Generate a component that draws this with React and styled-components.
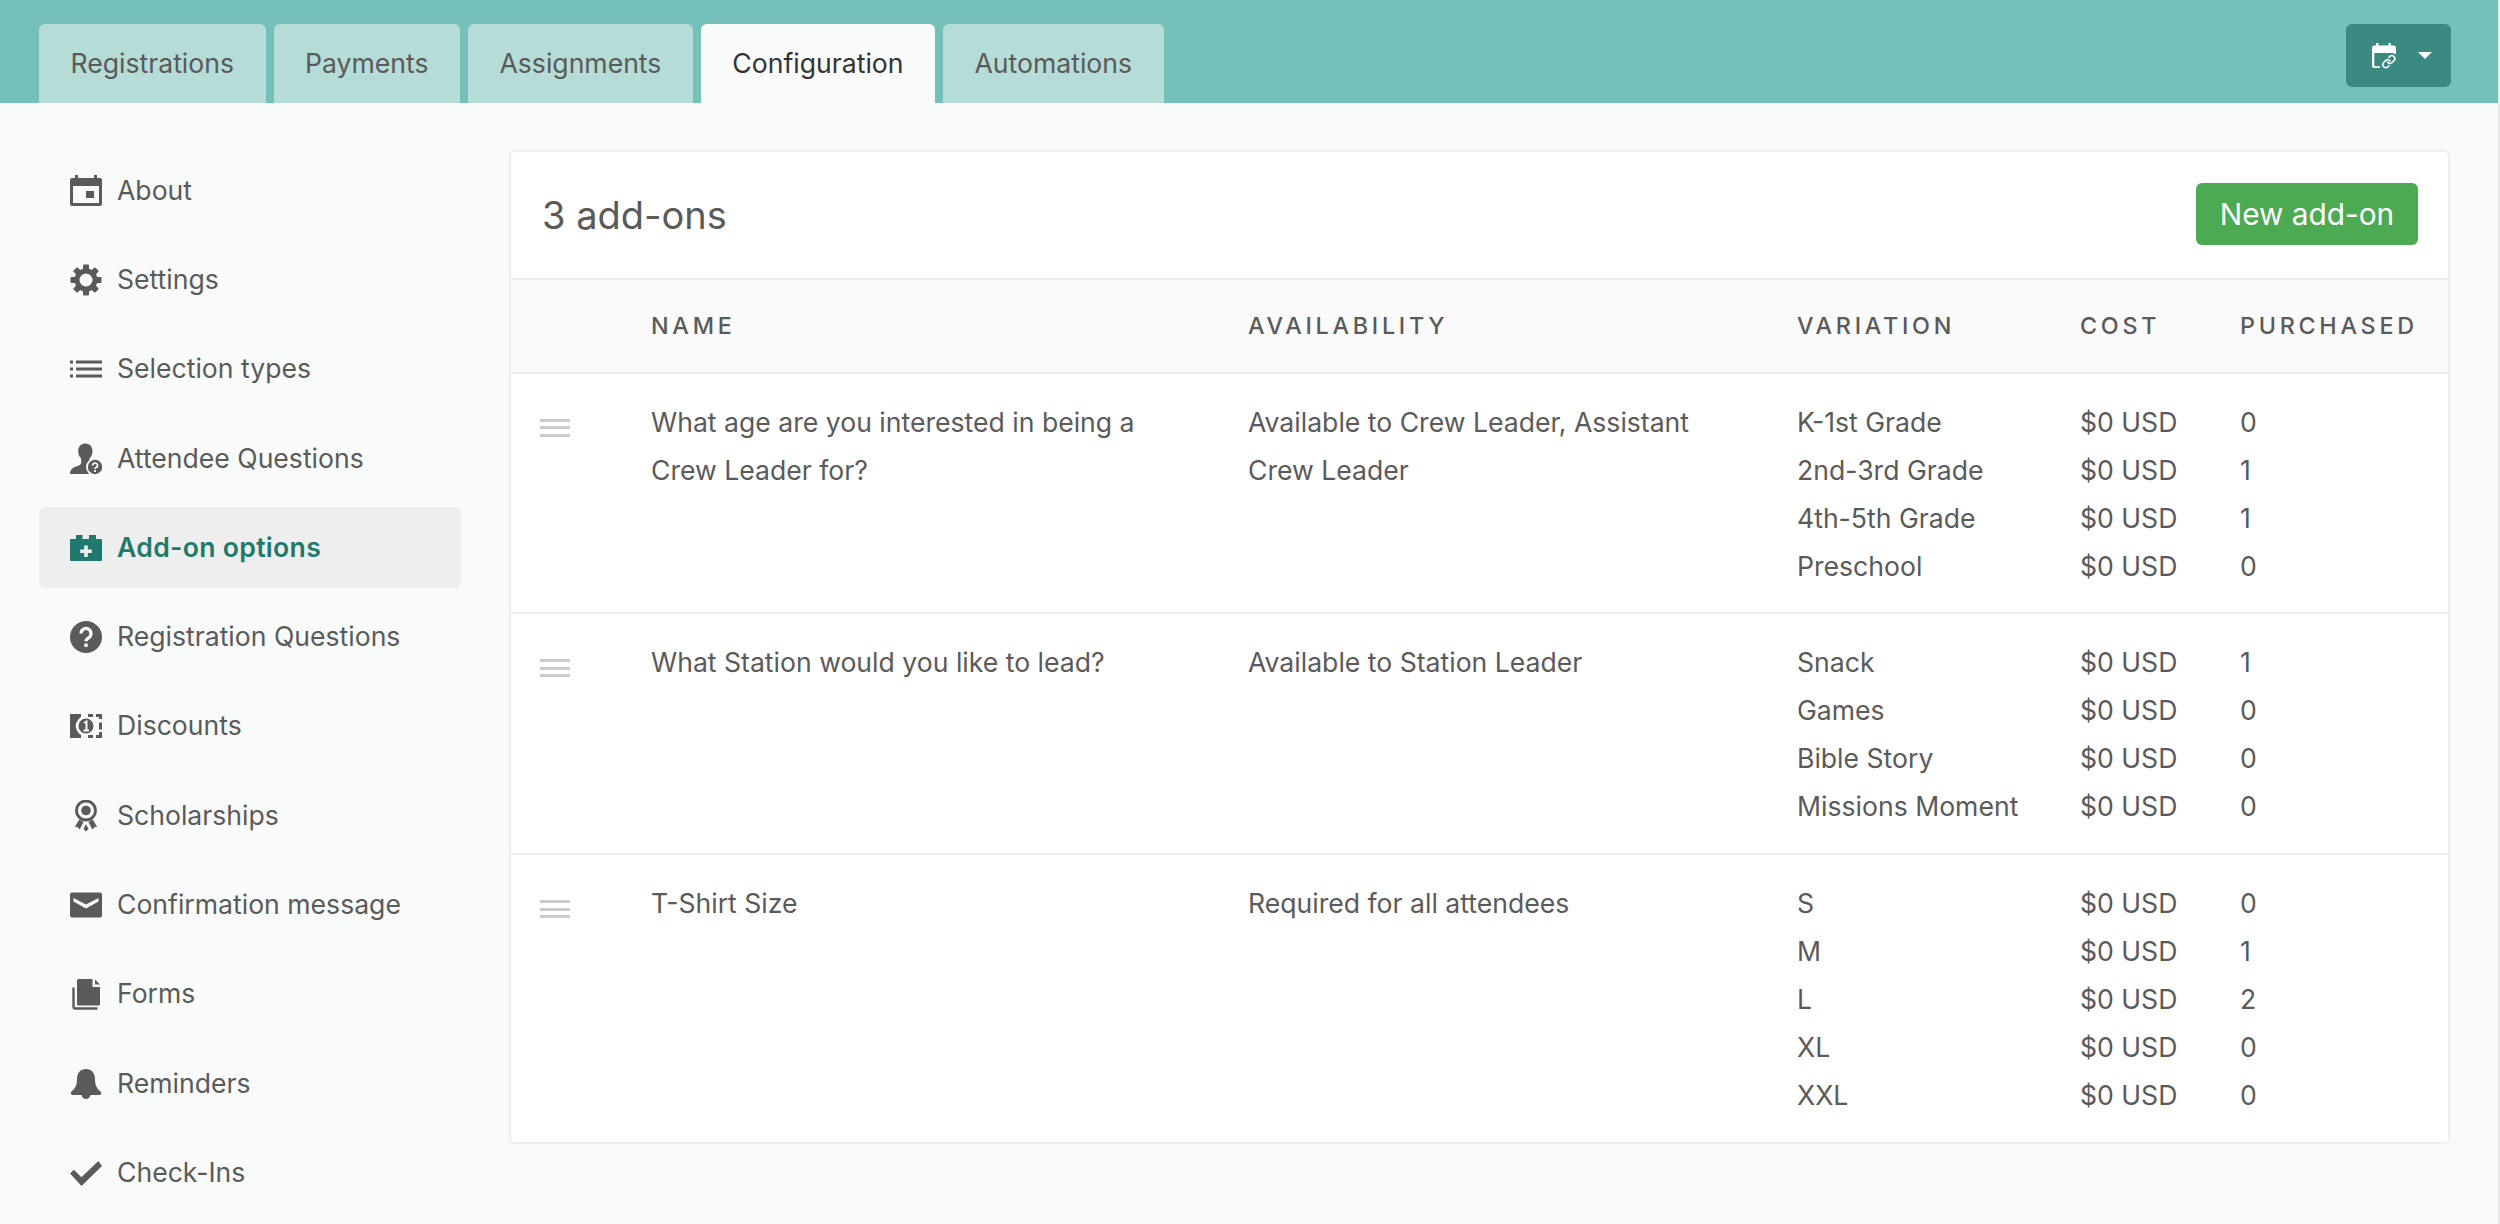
import styled, { createGlobalStyle } from "styled-components";

const GlobalStyle = createGlobalStyle`
  html, body {
    margin: 0;
    padding: 0;
    background: #f9fbfa;
  }
  * {
    box-sizing: border-box;
  }
`;

const tabs = ["Registrations", "Payments", "Assignments", "Configuration", "Automations"];

const addOns = [
  {
    name: "What age are you interested in being a Crew Leader for?",
    availability: "Available to Crew Leader, Assistant Crew Leader",
    variations: [
      ["K-1st Grade", 0],
      ["2nd-3rd Grade", 1],
      ["4th-5th Grade", 1],
      ["Preschool", 0],
    ],
  },
  {
    name: "What Station would you like to lead?",
    availability: "Available to Station Leader",
    variations: [
      ["Snack", 1],
      ["Games", 0],
      ["Bible Story", 0],
      ["Missions Moment", 0],
    ],
  },
  {
    name: "T-Shirt Size",
    availability: "Required for all attendees",
    variations: [
      ["S", 0],
      ["M", 1],
      ["L", 2],
      ["XL", 0],
      ["XXL", 0],
    ],
  },
];

const AboutIcon = () => (
  <NavIcon viewBox="0 0 32 32">
    <path
      fillRule="evenodd"
      d="M5 0h3v3h16V0h3v3h3a2 2 0 0 1 2 2v24a2 2 0 0 1-2 2H2a2 2 0 0 1-2-2V5a2 2 0 0 1 2-2h3zM3 11v17h26V11zm13 5h8v7h-8z"
    />
  </NavIcon>
);

const SettingsIcon = () => (
  <NavIcon viewBox="0 0 32 32">
    <circle cx="16" cy="16" r="9" fill="none" stroke="currentColor" strokeWidth="5" />
    {[0, 45, 90, 135, 180, 225, 270, 315].map((a) => (
      <rect key={a} x="13" y="0.5" width="6" height="6" rx="1" transform={`rotate(${a} 16 16)`} />
    ))}
  </NavIcon>
);

const ListIcon = () => (
  <NavIcon viewBox="0 0 32 32">
    <path d="M0 7.5h3v3H0zM6 7.5h26v3H6zM0 14.5h3v3H0zM6 14.5h26v3H6zM0 21.5h3v3H0zM6 21.5h26v3H6z" />
  </NavIcon>
);

const AttendeeIcon = () => (
  <NavIcon viewBox="0 0 32 32">
    <path d="M15.5 0.5c4 0 7 3 7 7.5 0 3-1 5.5-3 7.5v4c0 1.5 1 2 3 3v8.5H1c-1 0-1-1-.8-2 .8-3 3-4.5 6-5.5 3-1 5-2 5-4v-4c-2-2-3-4.5-3-7.5 0-4.5 3-7.5 7.3-7.5z" />
    <circle cx="25" cy="24" r="9" fill="#f9fbfa" />
    <circle cx="25" cy="24" r="7.2" />
    <path
      d="M22.7 22.5a2.4 2.4 0 1 1 3.4 2.1c-.8.4-1.1.8-1.1 1.5"
      fill="none"
      stroke="#f9fbfa"
      strokeWidth="1.7"
    />
    <rect x="24" y="27" width="2" height="2" fill="#f9fbfa" />
  </NavIcon>
);

const AddOnIcon = () => (
  <NavIcon viewBox="0 0 32 32">
    <path
      fillRule="evenodd"
      d="M6 3h6.5v4H19V3h7v4h5a1 1 0 0 1 1 1v20a1 1 0 0 1-1 1H1a1 1 0 0 1-1-1V8a1 1 0 0 1 1-1h5zM14.2 13.5v4h-4V21h4v4h3.6v-4h4v-3.5h-4v-4z"
    />
  </NavIcon>
);

const QuestionIcon = () => (
  <NavIcon viewBox="0 0 32 32">
    <circle cx="16" cy="16" r="16" />
    <path
      d="M11 12.5a5 5 0 1 1 7.6 4.3c-1.7 1-2.6 1.7-2.6 3.5"
      fill="none"
      stroke="#f9fbfa"
      strokeWidth="3.2"
    />
    <rect x="14.2" y="22.5" width="3.6" height="3.6" rx="1" fill="#f9fbfa" />
  </NavIcon>
);

const DiscountIcon = () => (
  <NavIcon viewBox="0 0 32 32">
    <path d="M0 4h11v3a9 9 0 0 0-4 4.5 9 9 0 0 0 0 9 9 9 0 0 0 4 4.5v3H0z" />
    <path d="M18 4h5v3h-5zM26 4h6v5h-3V7h-3zM29 12.5h3v7h-3zM26 28h6v-6h-3v3h-3zM18 25h5v3h-5z" />
    <circle cx="16" cy="16" r="7.5" />
    <path d="M14 13l2.5-1.5V20M13.5 20.5H19" fill="none" stroke="#f9fbfa" strokeWidth="2" />
  </NavIcon>
);

const ScholarshipIcon = () => (
  <NavIcon viewBox="0 0 32 32">
    <circle cx="16" cy="10.5" r="9.5" fill="none" stroke="currentColor" strokeWidth="2.8" />
    <circle cx="16" cy="10.5" r="4.8" />
    <path d="M9.3 19.5l4.2 2.5-3.8 7.5-2.7-2.7-2.2.3z" />
    <path d="M22.7 19.5L18.5 22l3.8 7.5 2.7-2.7 2.2.3z" />
    <path d="M16 24l2.5 5-2.5 2.5-2.5-2.5z" />
  </NavIcon>
);

const MailIcon = () => (
  <NavIcon viewBox="0 0 32 32">
    <path
      fillRule="evenodd"
      d="M2 3.5h28a2 2 0 0 1 2 2v21a2 2 0 0 1-2 2H2a2 2 0 0 1-2-2v-21a2 2 0 0 1 2-2zM3.5 9v3.5L16 19.5l12.5-7V9L16 15.5z"
    />
  </NavIcon>
);

const FormsIcon = () => (
  <NavIcon viewBox="0 0 32 32">
    <path d="M8.5 1h14v8H30v17a1.5 1.5 0 0 1-1.5 1.5h-20A1.5 1.5 0 0 1 7 26V2.5A1.5 1.5 0 0 1 8.5 1z" />
    <path d="M25 1.5l5 5h-5z" />
    <path d="M3.5 9.5v19a2 2 0 0 0 2 2h22" fill="none" stroke="currentColor" strokeWidth="2.4" />
  </NavIcon>
);

const BellIcon = () => (
  <NavIcon viewBox="0 0 32 32">
    <path d="M16 1c5.5 0 9 4 9 10 0 6 1.5 9 5.500 12.5 1.500 1.5.5 3.500-1.500 3.500h-8.500c-.5 2.500-2.500 4-4.500 4s-4-1.500-4.500-4H3c-2 0-3-2-1.500-3.500C5.500 20 7 17 7 11c0-6 3.500-10 9-10z" />
  </NavIcon>
);

const CheckIcon = () => (
  <NavIcon viewBox="0 0 32 32">
    <path d="M0 16.5l3.800-3.800 7.600 7.500L28.400 4l3.600 5-20.500 20z" />
  </NavIcon>
);

const CalendarLinkIcon = () => (
  <svg width="24" height="26" viewBox="0 0 24 26" fill="none">
    <path
      d="M4 0h2.5v2.5h10V0H19v2.5h2.5A2.5 2.5 0 0 1 24 5v6h-2.3v-1H2.3v12c0 .8.5 1.3 1.3 1.3H8V25H2.5A2.5 2.5 0 0 1 0 22.5V5a2.5 2.5 0 0 1 2.5-2.5H4z"
      fill="#fff"
    />
    <g transform="translate(9.6 11.4) scale(0.6)" stroke="#fff" strokeWidth="2.6" strokeLinecap="round">
      <path d="M10 13a5 5 0 0 0 7.54.54l3-3a5 5 0 0 0-7.07-7.07l-1.72 1.71" />
      <path d="M14 11a5 5 0 0 0-7.54-.54l-3 3a5 5 0 0 0 7.07 7.07l1.71-1.71" />
    </g>
  </svg>
);

const navItems = [
  ["About", AboutIcon],
  ["Settings", SettingsIcon],
  ["Selection types", ListIcon],
  ["Attendee Questions", AttendeeIcon],
  ["Add-on options", AddOnIcon],
  ["Registration Questions", QuestionIcon],
  ["Discounts", DiscountIcon],
  ["Scholarships", ScholarshipIcon],
  ["Confirmation message", MailIcon],
  ["Forms", FormsIcon],
  ["Reminders", BellIcon],
  ["Check-Ins", CheckIcon],
];

export default function App() {
  return (
    <Page>
      <GlobalStyle />
      <TopBar>
        <Tabs>
          {tabs.map((tab) => (
            <Tab key={tab} $active={tab === "Configuration"}>
              {tab}
            </Tab>
          ))}
        </Tabs>
        <CalendarButton>
          <CalendarLinkIcon />
          <Caret />
        </CalendarButton>
      </TopBar>
      <Body>
        <Sidebar>
          {navItems.map(([label, Icon]) => (
            <NavItem key={label} $active={label === "Add-on options"}>
              <Icon />
              <NavLabel>{label}</NavLabel>
            </NavItem>
          ))}
        </Sidebar>
        <Card>
          <CardHeader>
            <CardTitle>3 add-ons</CardTitle>
            <NewButton>New add-on</NewButton>
          </CardHeader>
          <Table>
            <colgroup>
              <col width="140" />
              <col width="597" />
              <col width="549" />
              <col width="283" />
              <col width="160" />
              <col />
            </colgroup>
            <thead>
              <tr>
                <HeadCell />
                <HeadCell>Name</HeadCell>
                <HeadCell>Availability</HeadCell>
                <HeadCell>Variation</HeadCell>
                <HeadCell>Cost</HeadCell>
                <HeadCell>Purchased</HeadCell>
              </tr>
            </thead>
            <tbody>
              {addOns.map((addOn) => (
                <Row key={addOn.name}>
                  <Cell>
                    <DragHandle />
                  </Cell>
                  <WrapCell>{addOn.name}</WrapCell>
                  <WrapCell>{addOn.availability}</WrapCell>
                  <Cell>
                    {addOn.variations.map(([name]) => (
                      <Line key={name}>{name}</Line>
                    ))}
                  </Cell>
                  <Cell>
                    {addOn.variations.map(([name]) => (
                      <Line key={name}>$0 USD</Line>
                    ))}
                  </Cell>
                  <Cell>
                    {addOn.variations.map(([name, count]) => (
                      <Line key={name}>{count}</Line>
                    ))}
                  </Cell>
                </Row>
              ))}
            </tbody>
          </Table>
        </Card>
      </Body>
    </Page>
  );
}

const Page = styled.div`
  height: 1224px;
  overflow: hidden;
  border-right: 2px solid #e9ebea;
  background: #f9fbfa;
  color: #5a5a5a;
  font-family: Inter, "Liberation Sans", sans-serif;
  font-size: 26.6px;
`;

const TopBar = styled.header`
  display: flex;
  align-items: flex-start;
  justify-content: space-between;
  height: 103px;
  padding: 24px 47px 0 39px;
  background: #76c0ba;
`;

const Tabs = styled.nav`
  display: flex;
  gap: 8px;
`;

const Tab = styled.div`
  display: flex;
  align-items: center;
  height: 79px;
  padding: 0 31.5px 1px;
  border-radius: 6px 6px 0 0;
  background: ${(props) => (props.$active ? "#f9fbfa" : "#b5dcd7")};
  color: ${(props) => (props.$active ? "#333" : "#5a5a5a")};
`;

const CalendarButton = styled.button`
  display: flex;
  align-items: center;
  gap: 22px;
  width: 105px;
  height: 63px;
  padding: 0 0 0 26px;
  border: none;
  border-radius: 6px;
  background: #3a8a81;
`;

const Caret = styled.span`
  width: 0;
  height: 0;
  border-top: 7px solid #fff;
  border-left: 7px solid transparent;
  border-right: 7px solid transparent;
`;

const Body = styled.main`
  display: flex;
  gap: 48px;
  padding: 47px 48px 0 39px;
`;

const Sidebar = styled.aside`
  display: flex;
  flex: 0 0 422px;
  flex-direction: column;
  gap: 8px;
`;

const NavItem = styled.a`
  display: flex;
  align-items: center;
  gap: 15px;
  flex: none;
  height: 81.3px;
  padding: 0 31px;
  border-radius: 6px;
  background: ${(props) => (props.$active ? "#eeeeee" : "transparent")};
  color: ${(props) => (props.$active ? "#1f7a6d" : "#5a5a5a")};
  font-weight: ${(props) => (props.$active ? 600 : 400)};
  letter-spacing: ${(props) => (props.$active ? "0.3px" : "0")};
`;

const NavLabel = styled.span`
  padding-bottom: 2px;
`;

const NavIcon = styled.svg`
  flex: none;
  width: 32px;
  height: 32px;
  fill: currentColor;
`;

const Card = styled.section`
  flex: 1;
  align-self: flex-start;
  border: 2px solid #eef0ef;
  border-radius: 6px;
  background: #fff;
`;

const CardHeader = styled.div`
  display: flex;
  align-items: center;
  justify-content: space-between;
  height: 125.5px;
  padding: 0 30px 0 31px;
`;

const CardTitle = styled.h2`
  margin: 0;
  font-size: 38px;
  font-weight: 400;
`;

const NewButton = styled.button`
  height: 62px;
  width: 222px;
  margin-bottom: 1.5px;
  border: none;
  border-radius: 6px;
  background: #4caa53;
  color: #fff;
  font-family: inherit;
  font-size: 29.8px;
`;

const Table = styled.table`
  width: 100%;
  border-collapse: collapse;
  table-layout: fixed;
`;

const HeadCell = styled.th`
  height: 94px;
  padding: 0;
  border-top: 2px solid #eeeeee;
  border-bottom: 2px solid #eeeeee;
  background: #fafafa;
  font-size: 23.3px;
  font-weight: 500;
  letter-spacing: 3.75px;
  text-align: left;
  text-transform: uppercase;
  white-space: nowrap;
`;

const Row = styled.tr`
  border-top: 2px solid #eeeeee;

  &:first-child {
    border-top: none;
  }
`;

const Cell = styled.td`
  padding: 24px 0 22.8px;
  line-height: 48px;
  vertical-align: top;
`;

const WrapCell = styled(Cell)`
  padding-right: 60px;
`;

const Line = styled.div`
  white-space: nowrap;
`;

const DragHandle = styled.div`
  width: 30px;
  height: 18px;
  margin: 21px 0 0 29px;
  border-top: 3px solid #ccc;
  border-bottom: 3px solid #ccc;
  background: linear-gradient(#ccc, #ccc) center / 100% 3px no-repeat;
`;
